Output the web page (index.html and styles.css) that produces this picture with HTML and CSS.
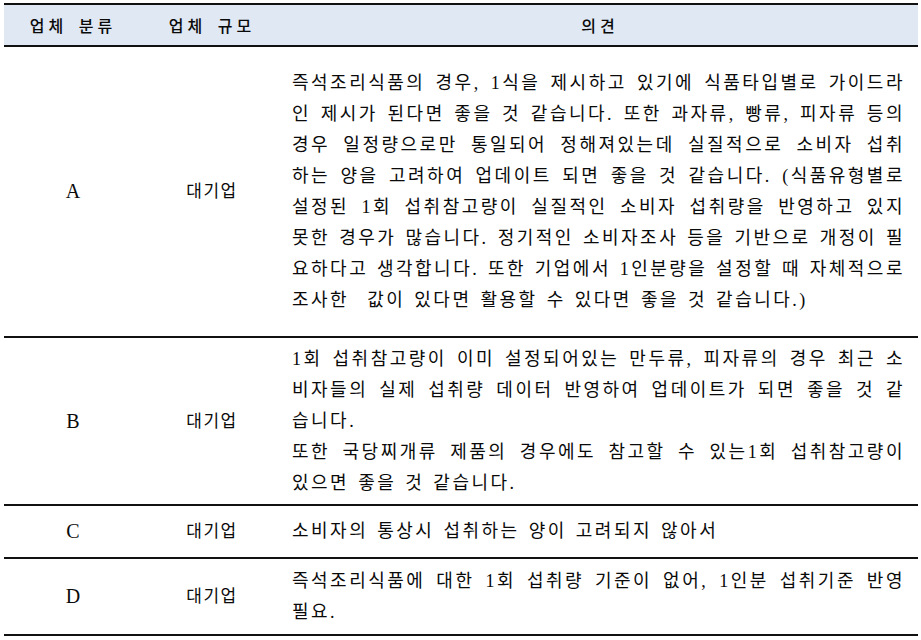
FILE: index.html
```html
<!DOCTYPE html>
<html lang="ko">
<head>
<meta charset="utf-8">
<title>업체 의견</title>
<link rel="stylesheet" href="styles.css">
</head>
<body>
<table class="opinions">
  <colgroup>
    <col class="c-kind">
    <col class="c-size">
    <col class="c-text">
  </colgroup>
  <thead>
    <tr class="head">
      <th>업체 분류</th>
      <th>업체 규모</th>
      <th>의견</th>
    </tr>
  </thead>
  <tbody>
    <tr class="row-a">
      <td class="letter">A</td>
      <td class="center">대기업</td>
      <td class="text">
        <span class="ln">즉석조리식품의 경우, 1식을 제시하고 있기에 식품타입별로 가이드라</span>
        <span class="ln">인 제시가 된다면 좋을 것 같습니다. 또한 과자류, 빵류, 피자류 등의</span>
        <span class="ln">경우 일정량으로만 통일되어 정해져있는데 실질적으로 소비자 섭취</span>
        <span class="ln">하는 양을 고려하여 업데이트 되면 좋을 것 같습니다. (식품유형별로</span>
        <span class="ln">설정된 1회 섭취참고량이 실질적인 소비자 섭취량을 반영하고 있지</span>
        <span class="ln">못한 경우가 많습니다. 정기적인 소비자조사 등을 기반으로 개정이 필</span>
        <span class="ln">요하다고 생각합니다. 또한 기업에서 1인분량을 설정할 때 자체적으로</span>
        <span class="ln end">조사한&nbsp; 값이 있다면 활용할 수 있다면 좋을 것 같습니다.)</span>
      </td>
    </tr>
    <tr class="row-b">
      <td class="letter">B</td>
      <td class="center">대기업</td>
      <td class="text">
        <span class="ln">1회 섭취참고량이 이미 설정되어있는 만두류, 피자류의 경우 최근 소</span>
        <span class="ln">비자들의 실제 섭취량 데이터 반영하여 업데이트가 되면 좋을 것 같</span>
        <span class="ln end">습니다.</span>
        <span class="ln">또한 국당찌개류 제품의 경우에도 참고할 수 있는1회 섭취참고량이</span>
        <span class="ln end">있으면 좋을 것 같습니다.</span>
      </td>
    </tr>
    <tr class="row-c">
      <td class="letter">C</td>
      <td class="center">대기업</td>
      <td class="text">
        <span class="ln end">소비자의 통상시 섭취하는 양이 고려되지 않아서</span>
      </td>
    </tr>
    <tr class="row-d">
      <td class="letter">D</td>
      <td class="center">대기업</td>
      <td class="text">
        <span class="ln">즉석조리식품에 대한 1회 섭취량 기준이 없어, 1인분 섭취기준 반영</span>
        <span class="ln end">필요.</span>
      </td>
    </tr>
  </tbody>
</table>
</body>
</html>
```

FILE: styles.css
```css
html, body {
  background: #ffffff;
}

body {
  margin: 3px 3px 0 4px;
  color: #0a0a0a;
  font-family: "Liberation Serif", "Noto Sans CJK KR", serif;
}

.opinions {
  width: 914px;
  border-collapse: collapse;
  table-layout: fixed;
  border-top: 2px solid #111111;
  border-bottom: 2px solid #111111;
}

.c-kind { width: 138px; }
.c-size { width: 140px; }
.c-text { width: 636px; }

.head {
  height: 42px;
  background: #dfe8f3;
}

.head th {
  padding: 0;
  font-family: "Noto Sans CJK KR", "Liberation Sans", sans-serif;
  font-size: 16px;
  font-weight: 500;
  letter-spacing: 4px;
  word-spacing: 3px;
  text-align: center;
  vertical-align: middle;
  color: #0a0a0a;
  border-bottom: 2px solid #111111;
}

.opinions td {
  padding: 0;
  vertical-align: middle;
  font-size: 18px;
  line-height: 31px;
  letter-spacing: 2.5px;
  word-spacing: 1px;
  border-bottom: 2px solid #111111;
}

.opinions td.letter {
  text-align: center;
  font-size: 20px;
  letter-spacing: 0;
}

.opinions td.center {
  text-align: center;
  font-size: 17px;
  letter-spacing: 1.5px;
}

.opinions td.text {
  padding: 0 13px 0 10px;
}

.ln {
  display: block;
  text-align: justify;
  text-align-last: justify;
}

.ln.end {
  text-align: left;
  text-align-last: left;
  word-spacing: 2px;
}

.row-a { height: 291px; }
.row-b { height: 168px; }
.row-c { height: 53px; }
.row-d { height: 77px; }
```
